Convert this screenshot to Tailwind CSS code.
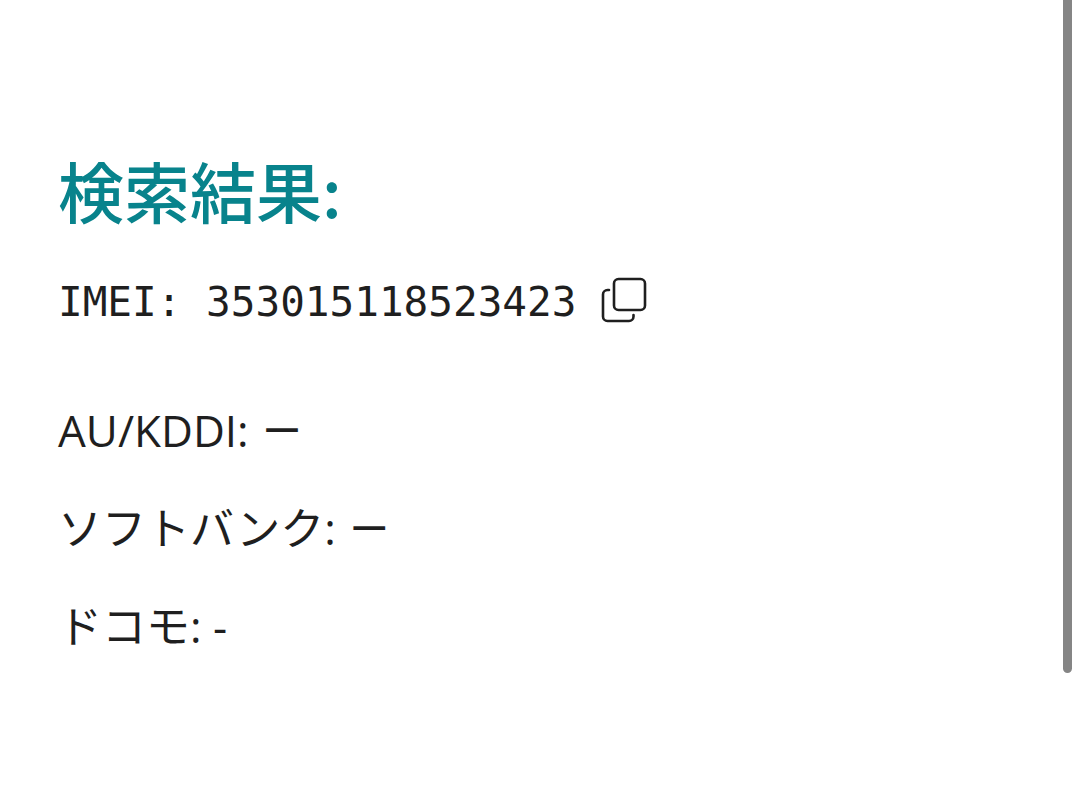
<!DOCTYPE html>
<html lang="ja">
<head>
    <meta charset="UTF-8">
    <meta name="viewport" content="width=device-width, initial-scale=1.0">
    <title>検索結果</title>
    <script src="https://cdn.jsdelivr.net/npm/@tailwindcss/browser@4"></script>
</head>
<body class="bg-white text-[#1f1f1f] font-['Open_Sans','Noto_Sans_CJK_JP',sans-serif]">
    <main class="px-[58px] pt-36">
        <h1 class="text-[66px] leading-[90px] font-medium text-[#08838c] font-['Noto_Sans_CJK_JP',sans-serif]">検索結果:</h1>
        <div class="mt-8 flex items-center gap-[25px]">
            <p class="pt-1 text-[41px] leading-[64px] font-['DejaVu_Sans_Mono',monospace]">IMEI: 353015118523423</p>
            <button type="button" aria-label="コピー" class="cursor-pointer">
                <svg class="h-[46px] w-[46px]" viewBox="0 0 46 46" fill="none" stroke="currentColor" stroke-width="2.6" stroke-linecap="round">
                    <rect x="13" y="2" width="31" height="31" rx="4.5"/>
                    <path d="M8 13H6.500A4.500 4.500 0 0 0 2 17.500V39.500A4.500 4.500 0 0 0 6.500 44H28A4.500 4.500 0 0 0 32.500 39.500V38"/>
                </svg>
            </button>
        </div>
        <div class="mt-16 space-y-[34px] text-[44px] leading-[64px]">
            <p>AU/KDDI: <span class="font-medium">－</span></p>
            <p>ソフトバンク: <span class="font-medium">－</span></p>
            <p>ドコモ: -</p>
        </div>
    </main>
    <!-- Scroll indicator -->
    <div class="fixed top-0 right-2 h-[84%] w-[9px] rounded-b-full bg-[#858585]"></div>
</body>
</html>
